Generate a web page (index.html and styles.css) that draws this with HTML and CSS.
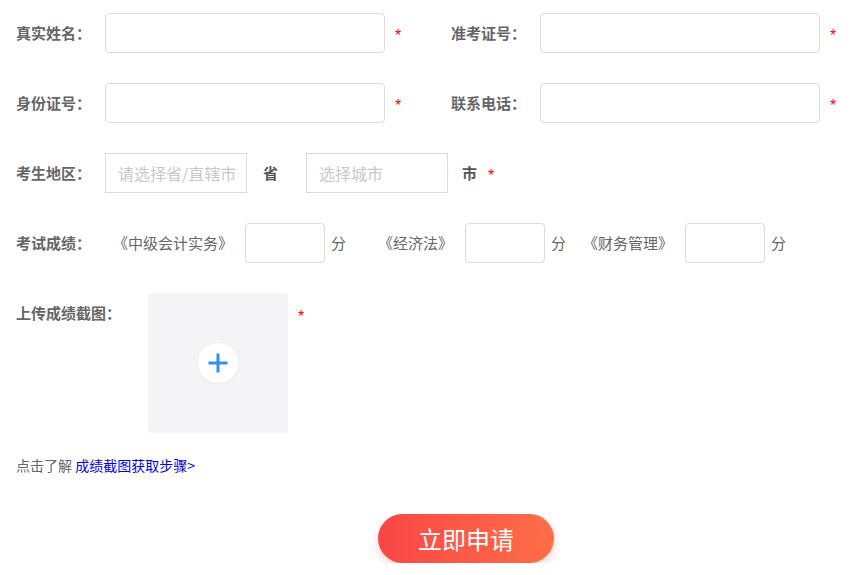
FILE: index.html
```html
<!DOCTYPE html>
<html lang="zh-CN">
<head>
<meta charset="utf-8">
<title>成绩申请</title>
<link rel="stylesheet" href="styles.css">
</head>
<body>
<form class="form">
  <div class="row">
    <div class="field">
      <span class="label">真实姓名：</span>
      <input class="input" type="text">
      <span class="star">*</span>
    </div>
    <div class="field">
      <span class="label">准考证号：</span>
      <input class="input" type="text">
      <span class="star">*</span>
    </div>
  </div>
  <div class="row">
    <div class="field">
      <span class="label">身份证号：</span>
      <input class="input" type="text">
      <span class="star">*</span>
    </div>
    <div class="field">
      <span class="label">联系电话：</span>
      <input class="input" type="text">
      <span class="star">*</span>
    </div>
  </div>
  <div class="row">
    <span class="label">考生地区：</span>
    <input class="select" type="text" placeholder="请选择省/直辖市" readonly>
    <span class="unit unit-prov">省</span>
    <input class="select" type="text" placeholder="选择城市" readonly>
    <span class="unit unit-city">市</span>
    <span class="star star-city">*</span>
  </div>
  <div class="row">
    <span class="label">考试成绩：</span>
    <span class="subject subject-1">《中级会计实务》</span>
    <input class="score" type="text">
    <span class="fen">分</span>
    <span class="subject subject-2">《经济法》</span>
    <input class="score" type="text">
    <span class="fen">分</span>
    <span class="subject subject-3">《财务管理》</span>
    <input class="score" type="text">
    <span class="fen">分</span>
  </div>
  <div class="row row-upload">
    <span class="label label-upload">上传成绩截图：</span>
    <div class="upload">
      <div class="upload-btn">
        <svg width="20" height="20" viewBox="0 0 20 20" aria-hidden="true">
          <path d="M10 0.5V19.5M0.5 10H19.5" stroke="#2f8ff2" stroke-width="3" fill="none"/>
        </svg>
      </div>
    </div>
    <span class="star star-upload">*</span>
  </div>
  <p class="hint">点击了解 <a class="hint-link" href="#">成绩截图获取步骤&gt;</a></p>
  <button class="submit" type="button">立即申请</button>
</form>
</body>
</html>
```

FILE: styles.css
```css
html, body {
  margin: 0;
  padding: 0;
  background: #fff;
}

body {
  font-family: "Noto Sans CJK SC", "Liberation Sans", sans-serif;
  color: #666;
}

.form {
  padding: 13px 0 0 16px;
}

.row {
  display: flex;
  align-items: center;
  height: 40px;
  margin-bottom: 30px;
}

.field {
  display: flex;
  align-items: center;
  flex: none;
  width: 435px;
}

.label {
  width: 89px;
  flex: none;
  font-size: 15px;
  font-weight: bold;
  color: #666;
  line-height: 20px;
}

.input {
  width: 280px;
  height: 40px;
  flex: none;
  box-sizing: border-box;
  border: 1px solid #dcdcdc;
  border-radius: 4px;
  outline: none;
  margin: 0;
  padding: 0 12px;
  font-size: 15px;
}

.star {
  color: #ff0000;
  font-family: "Liberation Sans", sans-serif;
  font-size: 16px;
  line-height: 16px;
  margin-left: 10px;
  padding-top: 5px;
}

.select {
  width: 142px;
  height: 40px;
  flex: none;
  box-sizing: border-box;
  border: 1px solid #d9d9d9;
  border-radius: 0;
  outline: none;
  margin: 0;
  padding: 0 0 0 12px;
  font-family: "Noto Sans CJK SC", sans-serif;
  font-size: 16px;
  background: #fff;
}

.select::placeholder {
  color: #c8c8c8;
}

.unit {
  font-size: 15px;
  font-weight: bold;
  color: #555;
  line-height: 20px;
}

.unit-prov {
  margin: 0 28px 0 16px;
}

.unit-city {
  margin-left: 14px;
}

.star-city {
  margin-left: 11px;
}

.subject {
  font-size: 15px;
  color: #666;
  line-height: 20px;
  margin-right: 12px;
}

.subject-1 {
  margin-left: 8px;
}

.subject-2 {
  margin-left: 32px;
}

.subject-3 {
  margin-left: 17px;
}

.score {
  width: 80px;
  height: 40px;
  flex: none;
  box-sizing: border-box;
  border: 1px solid #dcdcdc;
  border-radius: 4px;
  outline: none;
  margin: 0;
  padding: 0 8px;
  font-size: 15px;
}

.fen {
  font-size: 15px;
  color: #666;
  line-height: 20px;
  margin-left: 6px;
}

.row-upload {
  height: 140px;
  align-items: flex-start;
  margin-bottom: 0;
}

.label-upload {
  width: 132px;
  padding-top: 10px;
}

.upload {
  width: 140px;
  height: 140px;
  background: #f4f4f6;
  border-radius: 4px;
  display: flex;
  align-items: center;
  justify-content: center;
}

.upload-btn {
  width: 40px;
  height: 40px;
  border-radius: 50%;
  background: #fff;
  box-shadow: 0 1px 3px rgba(0, 0, 0, 0.05);
  display: flex;
  align-items: center;
  justify-content: center;
}

.upload-btn svg {
  display: block;
}

.star-upload {
  margin-left: 10px;
  padding-top: 16px;
}

.hint {
  margin: 22px 0 0;
  font-size: 14px;
  line-height: 20px;
  color: #666;
}

.hint-link {
  color: #0000ee;
  text-decoration: none;
}

.submit {
  display: block;
  margin: 39px 0 0 362px;
  width: 176px;
  height: 49px;
  border: none;
  border-radius: 25px;
  background: linear-gradient(90deg, #f94646 0%, #ff6e48 100%);
  box-shadow: 0 5px 10px rgba(255, 90, 80, 0.25);
  color: #fff;
  font-family: "Noto Sans CJK SC", sans-serif;
  font-size: 24px;
  line-height: 49px;
  padding: 0;
  cursor: pointer;
}
```
